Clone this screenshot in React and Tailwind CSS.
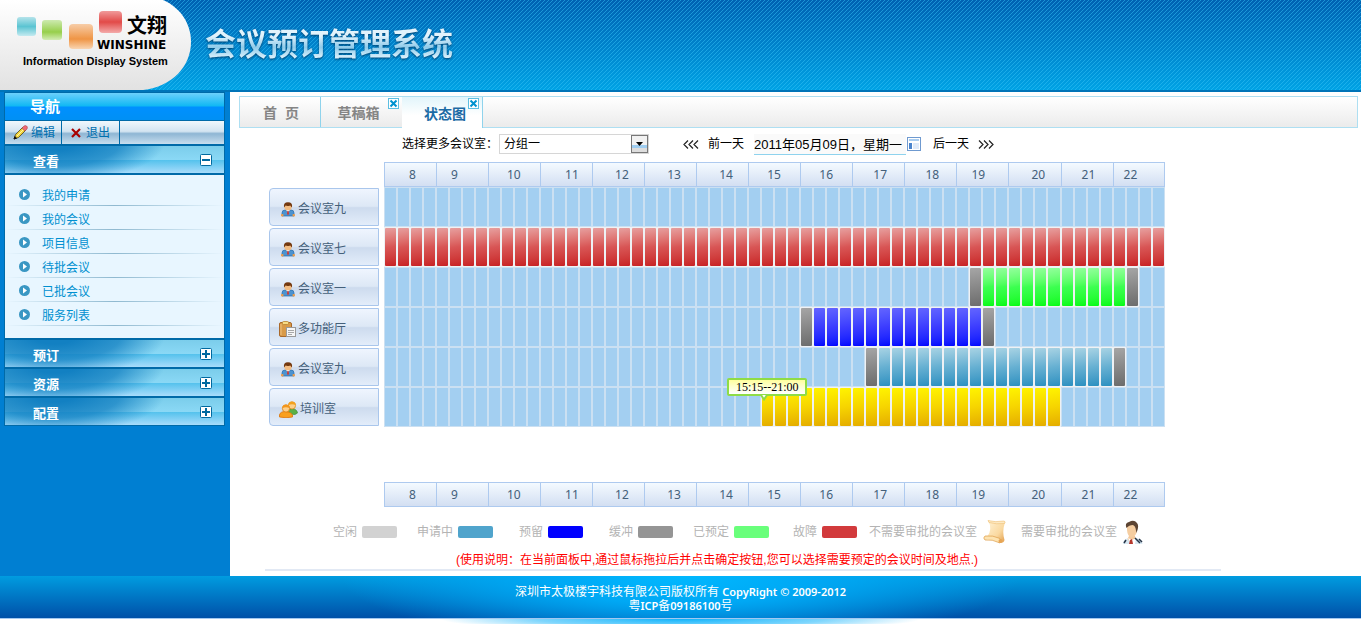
import { useState } from "react";
import clsx from "clsx";

const SLOTS = 60;

// the indent of each label differs a little from hour to hour
const hours = [
    { hour: 8, indent: "pl-6" },
    { hour: 9, indent: "pl-3.5" },
    { hour: 10, indent: "pl-[18px]" },
    { hour: 11, indent: "pl-6" },
    { hour: 12, indent: "pl-[22px]" },
    { hour: 13, indent: "pl-[22px]" },
    { hour: 14, indent: "pl-[22px]" },
    { hour: 15, indent: "pl-[18px]" },
    { hour: 16, indent: "pl-[18px]" },
    { hour: 17, indent: "pl-5" },
    { hour: 18, indent: "pl-5" },
    { hour: 19, indent: "pl-3.5" },
    { hour: 20, indent: "pl-[22px]" },
    { hour: 21, indent: "pl-5" },
    { hour: 22, indent: "pl-2.5" },
];

const rooms = [
    { id: 1, name: "会议室九", icon: "person", slots: [] },
    { id: 2, name: "会议室七", icon: "person", slots: [{ from: 0, to: 59, state: "fault" }] },
    {
        id: 3, name: "会议室一", icon: "person", slots: [
            { from: 45, to: 45, state: "buffer" },
            { from: 46, to: 56, state: "booked" },
            { from: 57, to: 57, state: "buffer" },
        ],
    },
    {
        id: 4, name: "多功能厅", icon: "clipboard", slots: [
            { from: 32, to: 32, state: "buffer" },
            { from: 33, to: 45, state: "reserved" },
            { from: 46, to: 46, state: "buffer" },
        ],
    },
    {
        id: 5, name: "会议室九", icon: "person", slots: [
            { from: 37, to: 37, state: "buffer" },
            { from: 38, to: 55, state: "applying" },
            { from: 56, to: 56, state: "buffer" },
        ],
    },
    { id: 6, name: "培训室", icon: "group", slots: [{ from: 29, to: 51, state: "selected", tip: "15:15--21:00" }] },
];

const stateClass = {
    free: "bg-[#a3cff1]",
    fault: "rounded-[1px] bg-linear-170 from-[#e6a0a0] via-[#d85555] to-[#c82024]",
    booked: "rounded-[1px] bg-linear-170 from-[#92ff9c] via-[#3cff50] to-[#00fb10]",
    reserved: "rounded-[1px] bg-linear-170 from-[#6464ff] via-[#3c3cff] to-[#0000ff]",
    applying: "rounded-[1px] bg-linear-170 from-[#a8d3e4] via-[#66b0d2] to-[#2990c0]",
    buffer: "rounded-[1px] bg-linear-170 from-[#a6a6a6] to-[#6c6c6c]",
    selected: "rounded-[1px] bg-linear-170 from-[#fff400] via-[#f6d400] to-[#e4ac00]",
};

const legend = [
    { name: "空闲", color: "bg-[#d2d2d2]", space: "" },
    { name: "申请中", color: "bg-[#50a4cc]", space: "ml-5" },
    { name: "预留", color: "bg-[#0000ff]", space: "ml-[26px]" },
    { name: "缓冲", color: "bg-[#959595]", space: "ml-[26px]" },
    { name: "已预定", color: "bg-[#69ff7b]", space: "ml-5" },
    { name: "故障", color: "bg-[#d23a3c]", space: "ml-6" },
];

const PersonIcon = () => (
    <svg width="14" height="15" viewBox="0 0 14 15" aria-hidden="true">
        <path d="M1 14V11Q1 8 4 8H10Q13 8 13 11V14Z" fill="#4d93cf" stroke="#2d6ba8" strokeWidth=".7" />
        <path d="M5 8 7 10 9 8V7H5Z" fill="#fff" />
        <path d="M6.4 9H7.6L8 12 7 13 6 12Z" fill="#d33a32" />
        <circle cx="7" cy="5" r="3.6" fill="#f3bd83" />
        <path d="M3 5.4Q2.2.3 7 .3T11 5.4Q9.8 4.4 9.3 3.4 6.500 4.400 4.600 3.600 4 4.600 3 5.400Z" fill="#74390f" />
        <rect x="0" y="12" width="2.500" height="2.500" rx="1" fill="#ee9d4a" />
        <rect x="11.500" y="12" width="2.500" height="2.500" rx="1" fill="#ee9d4a" />
    </svg>
);

const ClipboardIcon = () => (
    <svg width="17" height="16" viewBox="0 0 17 16" aria-hidden="true">
        <rect x=".5" y="1.500" width="12" height="14" rx="1.500" fill="#d99a48" stroke="#a9682a" />
        <path d="M2 3V14" stroke="#f0c27f" />
        <rect x="3.500" y=".5" width="6" height="3" rx="1" fill="#f7dc85" stroke="#b98332" strokeWidth=".8" />
        <rect x="7.500" y="6.500" width="9" height="9" fill="#f6f6f6" stroke="#9a9a9a" />
        <path d="M9 9.500H15M9 11.500H15M9 13.500H13" stroke="#a8a8a8" />
    </svg>
);

const GroupIcon = () => (
    <svg width="19" height="17" viewBox="0 0 19 17" aria-hidden="true">
        <path d="M9 13Q8 8 13 7.500 18 8 18.500 12L16 13.500Z" fill="#5cb046" stroke="#36842b" strokeWidth=".6" />
        <circle cx="13" cy="4.500" r="3.600" fill="#fbd08b" stroke="#dc8a18" strokeWidth=".8" />
        <path d="M9.200 4Q9.500.3 13 .4T16.800 4Q13 2.500 9.200 4Z" fill="#f2a11f" />
        <path d="M.5 16V14Q1 10.500 6.500 10.500T13.500 14V16Q7 17.500.5 16Z" fill="#f9a01f" stroke="#dc7408" strokeWidth=".8" />
        <circle cx="7" cy="7.500" r="3.600" fill="#fdd08a" stroke="#dd7d12" strokeWidth=".8" />
        <path d="M3.200 7Q3.500 3.300 7 3.400T10.800 7Q7 5.300 3.200 7Z" fill="#f3961b" />
    </svg>
);

const ScrollIcon = () => (
    <svg width="24" height="24" viewBox="0 0 24 24" aria-hidden="true">
        <defs>
            <linearGradient id="paper" x1="0" y1="0" x2="1" y2="1">
                <stop offset="0" stopColor="#fff3d6" />
                <stop offset=".6" stopColor="#fad9a0" />
                <stop offset="1" stopColor="#e09a48" />
            </linearGradient>
        </defs>
        <path d="M5 .5Q12 2.500 21 1 23 1.500 21.500 4 19 12 21.500 20 21 23 17 23 9 19 4 17 10 9 5 .5Z" fill="url(#paper)" />
        <path d="M5 .5Q12 2.500 21 1 23 1.500 21.500 3.500 13 4.500 6 2.500Z" fill="#fde9c2" stroke="#eebf76" strokeWidth=".6" />
        <path d="M2 16Q10 15 17 18.500 19 20 17 23 9 19 2 20-.5 18 2 16Z" fill="#fde3b0" stroke="#dd9c48" strokeWidth=".7" />
        <circle cx="17.500" cy="21" r="2" fill="#e7a554" />
    </svg>
);

const ApproverIcon = () => (
    <svg width="20" height="24" viewBox="0 0 20 24" aria-hidden="true">
        <path d="M0 24Q0 19 6 18H13Q19 19 19.500 24Z" fill="#d7e7f2" />
        <path d="M6 16H12L12.500 19 9 24 4.500 19Z" fill="#f4c798" />
        <path d="M5 18 8 24H12L13 18 9 20Z" fill="#fff" />
        <path d="M7 20 9 19 10 24H6Z" fill="#b5382c" />
        <path d="M1 23 3 20M12 18 17 23M16 19 19 22" stroke="#253345" strokeWidth="1.500" />
        <path d="M4 5Q9 1 14 6L13.500 13Q11 18 8 17.500 4.500 16 4 10Z" fill="#f5cda0" />
        <path d="M3.500 8Q1.500 3 6 2 11-1 14 3 16.500 6 13.500 13L12.500 8Q12 6 10 5 6 5 3.500 8Z" fill="#5c4433" />
    </svg>
);

const roomIcons = { person: PersonIcon, clipboard: ClipboardIcon, group: GroupIcon };

const Logo = () => (
    <svg className="block h-[90px] w-[191px] shrink-0" viewBox="0 0 191 90" role="img" aria-label="文翔 WINSHINE">
        <defs>
            <linearGradient id="plate" x1="0" y1="0" x2="0" y2="1">
                <stop offset="0" stopColor="#ffffff" />
                <stop offset="1" stopColor="#e2e2e2" />
            </linearGradient>
            <linearGradient id="teal" x1="0" y1="0" x2="0" y2="1">
                <stop offset="0" stopColor="#b5e3ea" />
                <stop offset=".5" stopColor="#5bc4d2" />
                <stop offset="1" stopColor="#c4eaf0" />
            </linearGradient>
            <linearGradient id="green" x1="0" y1="0" x2="0" y2="1">
                <stop offset="0" stopColor="#cdeab0" />
                <stop offset=".6" stopColor="#97cf4b" />
                <stop offset="1" stopColor="#d3ecb5" />
            </linearGradient>
            <linearGradient id="orange" x1="0" y1="0" x2="0" y2="1">
                <stop offset="0" stopColor="#f7cda8" />
                <stop offset=".6" stopColor="#ef9545" />
                <stop offset="1" stopColor="#f9d5b2" />
            </linearGradient>
            <linearGradient id="red" x1="0" y1="0" x2="0" y2="1">
                <stop offset="0" stopColor="#f09a9a" />
                <stop offset=".5" stopColor="#e24a48" />
                <stop offset="1" stopColor="#f3aaaa" />
            </linearGradient>
        </defs>
        <path d="M0 0H163C181 8 191 24 191 42 191 66 172 87 143 90H0Z" fill="url(#plate)" />
        <rect x="17" y="17" width="19" height="19" rx="3" fill="url(#teal)" />
        <rect x="42" y="20" width="20" height="20" rx="3" fill="url(#green)" />
        <rect x="69" y="24" width="24" height="25" rx="4" fill="url(#orange)" />
        <rect x="99" y="11" width="23" height="22" rx="4" fill="url(#red)" />
        <text x="127" y="33" className="font-['Noto_Sans_CJK_SC',sans-serif] text-[20px] font-bold">文翔</text>
        <text x="97" y="49" className="font-['DejaVu_Sans',sans-serif] text-[12px] font-bold">WINSHINE</text>
        <text x="23" y="65" className="font-['Liberation_Sans',sans-serif] text-[11px] font-bold">Information Display System</text>
    </svg>
);

const PencilIcon = () => (
    <svg width="15" height="15" viewBox="0 0 15 15" aria-hidden="true">
        <path d="M1 14 2.500 9.500 10 2 13 5 5.500 12.500Z" fill="#f1d43c" stroke="#4a4020" strokeWidth=".8" />
        <path d="M4 11 11.500 3.500" stroke="#fff3a8" />
        <path d="M9 3 11 1Q12.500 0 13.800 1.300 15 2.600 14 4L12 6Z" fill="#ee6a72" stroke="#a94850" strokeWidth=".6" />
        <path d="M1 14 1.800 11.600 3.500 13.200Z" fill="#111" stroke="#111" />
    </svg>
);

const CrossIcon = () => (
    <svg width="10" height="10" viewBox="0 0 10 10" aria-hidden="true">
        <path d="M1 1 9 9M9 1 1 9" stroke="#a80000" strokeWidth="2.200" />
    </svg>
);

const ToggleIcon = ({ open }) => (
    <svg width="12" height="12" viewBox="0 0 12 12" aria-hidden="true">
        <rect x=".5" y=".5" width="11" height="11" rx="1" fill="#fff" stroke="#00699f" />
        <path d={open ? "M2 6H10" : "M2 6H10M6 2V10"} stroke="#00699f" strokeWidth="2" />
    </svg>
);

const SideHeading = ({ title, open, onClick }) => (
    <button
        className="flex h-[27px] w-full items-center justify-between bg-[radial-gradient(ellipse_110px_40px_at_50px_-4px,#1280c2_20%,#1280c2c0_60%,transparent),linear-gradient(#7bcdeb,#8ad8f5_50%,#52c1ec_51%,#a8dcfb)] pr-3 pl-7 text-[13px] font-bold text-white"
        onClick={onClick}
    >
        <span className="pt-1">{title}</span>
        <ToggleIcon open={open} />
    </button>
);

const Sidebar = () => {
    const [opened, setOpened] = useState("查看");
    const links = ["我的申请", "我的会议", "项目信息", "待批会议", "已批会议", "服务列表"];

    return (
        <aside className="w-[230px] shrink-0 bg-[#007fd2] pr-[5px] pl-1">
            <div className="flex flex-col gap-0.5 border border-t-0 border-[#006aa8] bg-[#006aa8]">
                <div>
                    <h2 className="h-7 border-t border-[#006aa8] bg-[linear-gradient(#6cd0fb,#10b8f4_48%,#0090ff_52%,#0090f4)] pt-0.5 pl-[25px] text-[15px] leading-6 font-bold text-white">导航</h2>
                    <div className="flex h-6 border-t border-[#006aa8] bg-[linear-gradient(#f0f8fd,#d3e4f1_45%,#8fb6d4_55%,#c8deee)] text-xs text-[#006fae]">
                        <button className="flex w-[57px] items-center gap-[3px] border-r border-[#006aa8] pl-2">
                            <PencilIcon />
                            编辑
                        </button>
                        <button className="flex w-[58px] items-center gap-[5px] border-r border-[#006aa8] pl-[9px]">
                            <CrossIcon />
                            退出
                        </button>
                    </div>
                </div>
                <div>
                    <SideHeading title="查看" open={opened === "查看"} onClick={() => setOpened("查看")} />
                    <ul className="mt-0.5 h-[163px] bg-[#e8f6ff] pt-[7px]">
                        {links.map((link) => (
                            <li key={link} className="bg-[linear-gradient(90deg,transparent,#8fb9d0_50%,transparent)] bg-[length:100%_1px] bg-bottom bg-no-repeat">
                                <a href="#" className="flex h-6 items-center gap-3 pt-1 pl-3.5 text-xs text-[#0090d0]">
                                    <svg width="11" height="11" viewBox="0 0 11 11" className="-mt-1" aria-hidden="true">
                                        <circle cx="5.500" cy="5.500" r="5.500" fill="#3a97c3" />
                                        <path d="M4 2.500 8 5.500 4 8.500Z" fill="#fff" />
                                    </svg>
                                    {link}
                                </a>
                            </li>
                        ))}
                    </ul>
                </div>
                {["预订", "资源", "配置"].map((title) => (
                    <SideHeading key={title} title={title} open={opened === title} onClick={() => setOpened(title)} />
                ))}
            </div>
        </aside>
    );
};

const TabClose = () => (
    <span className="absolute top-px right-[3px]">
        <svg width="11" height="11" viewBox="0 0 11 11" aria-hidden="true">
            <rect x=".5" y=".5" width="10" height="10" fill="#fff" stroke="#5dbfe2" />
            <path d="M2.500 2.500 8.500 8.500M8.500 2.500 2.500 8.500" stroke="#0092cf" strokeWidth="2" />
        </svg>
    </span>
);

const Tabs = () => (
    <nav className="mt-1 mr-[3px] ml-[9px] flex h-8 border border-[#aedff2] bg-linear-to-b from-white to-[#ebebeb] text-sm font-bold text-[#858585]">
        <button className="w-[81px] border-r border-[#8fd3ec] pt-0.5 pl-0.5 whitespace-pre">首  页</button>
        <button className="relative w-[81px] pt-0.5 pr-1.5">
            草稿箱
            <TabClose />
        </button>
        <button className="relative -mb-px w-[81px] border-r border-[#8fd3ec] bg-linear-to-b from-[#e2f5fb] to-white to-60% pt-0.5 pl-1.5 text-[#1c6ba5]">
            状态图
            <TabClose />
        </button>
    </nav>
);

const Arrows = ({ flip }) => (
    <svg width="16" height="9" viewBox="0 0 16 9" className={clsx(flip && "rotate-180")} aria-hidden="true">
        <path d="M5 .5 1 4.500 5 8.500M10 .5 6 4.500 10 8.500M15 .5 11 4.500 15 8.500" fill="none" stroke="#222" strokeWidth="1.200" />
    </svg>
);

const DateBar = () => {
    const [group, setGroup] = useState("分组一");

    return (
        <div className="mt-1.5 ml-[172px] flex h-5 items-center text-xs text-black">
            <label htmlFor="group" className="w-[97px]">选择更多会议室：</label>
            <div className="relative h-5 w-[150px]">
                <select
                    id="group"
                    value={group}
                    onChange={(e) => setGroup(e.target.value)}
                    className="h-5 w-full appearance-none border border-[#d6d6d6] bg-white pl-1 text-xs"
                >
                    <option>分组一</option>
                </select>
                <span className="pointer-events-none absolute top-px right-px flex h-[18px] w-[17px] items-center justify-center border border-[#777] bg-[linear-gradient(#f2f2f2_55%,#9fcdf0_55%,#9fcdf0_75%,#ddd_75%)]">
                    <svg width="7" height="4" viewBox="0 0 7 4" aria-hidden="true"><path d="M0 0H7L3.500 4Z" /></svg>
                </span>
            </div>
            <button className="ml-[34px] flex items-center gap-[9px]">
                <Arrows />
                前一天
            </button>
            <input
                aria-label="日期"
                readOnly
                value="2011年05月09日，星期一"
                className="ml-2.5 h-[21px] w-[152px] border-b border-[#8fd3ee] bg-[#fafafa] text-[13px]"
            />
            <button aria-label="选择日期" className="ml-px">
                <svg width="14" height="14" viewBox="0 0 14 14" aria-hidden="true">
                    <rect x=".5" y=".5" width="13" height="13" fill="#fff" stroke="#6f9ad0" />
                    <rect x="2" y="2" width="10" height="2" fill="#a9cdf0" />
                    <rect x="2" y="6" width="3" height="6" fill="#4a84cc" />
                    <rect x="6" y="6" width="6" height="6" fill="#dfeaf8" />
                </svg>
            </button>
            <button className="ml-3 flex items-center gap-[9px]">
                后一天
                <Arrows flip />
            </button>
        </div>
    );
};

const HourRow = () => (
    <tr>
        <td></td>
        {hours.map(({ hour, indent }) => (
            <th
                key={hour}
                colSpan={4}
                scope="col"
                className={clsx("h-[25px] border-y border-l border-[#aecaef] bg-linear-to-b from-[#f4faff] to-[#d3dff2] text-left font-['Noto_Sans',sans-serif] text-xs font-normal text-[#44607a] last:border-r", indent)}
            >
                {hour}
            </th>
        ))}
    </tr>
);

const RoomRow = ({ room }) => {
    const Icon = roomIcons[room.icon];

    return (
        <tr>
            <th scope="row" className="h-10 text-left font-normal">
                <button className="flex h-[38px] w-[110px] items-center gap-0.5 rounded-l-[4px] border border-[#a9c6ec] bg-[linear-gradient(#eff5fe,#dde8f6_48%,#cddbee_52%,#e3edfa)] pt-1 pl-[9px] text-[#44607a]">
                    <span className="flex min-w-[17px] justify-center">
                        <Icon />
                    </span>
                    {room.name}
                </button>
            </th>
            {Array.from({ length: SLOTS }, (_, i) => {
                const slot = room.slots.find((s) => i >= s.from && i <= s.to);
                return (
                    <td key={i} className={clsx("relative p-px", slot ? "bg-[#eef1f4]" : "bg-[#cbe0f2]")}>
                        <div className={clsx("h-[38px]", stateClass[slot ? slot.state : "free"])}></div>
                        {slot?.tip && i === slot.from && (
                            <div className="absolute -top-[9px] -left-[34px] z-10 h-[18px] w-20 rounded-[2px] border-2 border-[#8fdc46] bg-linear-to-b from-[#ffff9c] to-white text-center font-['Liberation_Serif',serif] text-xs leading-[14px] text-black">
                                {slot.tip}
                                <svg className="absolute top-[15px] left-[31px]" width="8" height="6" viewBox="0 0 8 6" aria-hidden="true">
                                    <path d="M1 0 4 4.500 7 0" fill="#fff" stroke="#8fdc46" strokeWidth="2" />
                                </svg>
                            </div>
                        )}
                    </td>
                );
            })}
        </tr>
    );
};

const Schedule = () => (
    <table className="mt-2 ml-[39px] w-[895px] table-fixed border-separate border-spacing-0 text-xs">
        <colgroup>
            <col className="w-[115px]" />
            {Array.from({ length: SLOTS }, (_, i) => <col key={i} className="w-[13px]" />)}
        </colgroup>
        <thead>
            <HourRow />
        </thead>
        <tbody>
            {rooms.map((room) => <RoomRow key={room.id} room={room} />)}
        </tbody>
        <tfoot>
            <tr><td className="h-[55px]"></td></tr>
            <HourRow />
        </tfoot>
    </table>
);

const Legend = () => (
    <div className="mt-3 ml-[103px] flex h-[26px] items-center text-xs text-[#b4b4b4]">
        {legend.map((item) => (
            <div key={item.name} className={clsx("flex items-center gap-[5px]", item.space)}>
                {item.name}
                <span className={clsx("h-3 w-[35px] rounded-[2px]", item.color)}></span>
            </div>
        ))}
        <div className="ml-3 flex items-center gap-1.5">
            不需要审批的会议室
            <ScrollIcon />
        </div>
        <div className="ml-3.5 flex items-center gap-1.5">
            需要审批的会议室
            <ApproverIcon />
        </div>
    </div>
);

const App = () => {
    return (
        <div className="w-full bg-white font-['Liberation_Sans','Noto_Sans_CJK_SC',sans-serif]">
            <header className="flex h-[92px] items-start border-b-2 border-[#0074b8] bg-[linear-gradient(135deg,#38c4f880_12.5%,transparent_12.5%_50%,#38c4f880_50%_62.5%,transparent_62.5%),linear-gradient(#0062b2,#00a2e4)] bg-[length:4px_4px,100%_100%]">
                <Logo />
                <h1 className="mt-[22px] ml-3.5 bg-linear-to-b from-[#e2f3fc] from-30% via-[#8ecbea] via-55% to-[#e0f4fd] to-80% bg-clip-text text-[31px] leading-[46px] font-bold text-transparent drop-shadow-[0_1px_1px_#00406c]">
                    会议预订管理系统
                </h1>
            </header>

            <div className="flex">
                <Sidebar />
                <main className="min-w-0 grow pb-[5px]">
                    <Tabs />
                    <DateBar />
                    <Schedule />
                    <Legend />
                    <p className="mt-1.5 ml-[226px] h-4 text-xs leading-[18px] text-[#f00]">
                        (使用说明：在当前面板中,通过鼠标拖拉后并点击确定按钮,您可以选择需要预定的会议时间及地点.)
                    </p>
                    <hr className="mt-0.5 mr-[140px] ml-[35px] border-t-2 border-[#e2e9f4]" />
                </main>
            </div>

            <footer>
                <div className="h-[42px] bg-[radial-gradient(ellipse_340px_70px_at_50%_0,#00b8ff,#00a8f4_40%,transparent),linear-gradient(#009ce0,#0050a8)] pt-[9px] text-center text-xs leading-[13px] text-white">
                    <p>深圳市太极楼宇科技有限公司版权所有 <span className="font-['Noto_Sans',sans-serif] text-[11px] font-semibold">CopyRight © 2009-2012</span></p>
                    <p>粤<b className="font-['Noto_Sans',sans-serif] text-[11px] font-semibold">ICP</b>备<b className="font-['Noto_Sans',sans-serif] text-[11px] font-semibold">09186100</b>号</p>
                </div>
                <div className="h-1.5 border-t border-[#a4c8f0] bg-[radial-gradient(ellipse_240px_12px_at_50%_0,#10b4fc,#7fd6fd_60%,transparent)]"></div>
            </footer>
        </div>
    );
};

export default App;
